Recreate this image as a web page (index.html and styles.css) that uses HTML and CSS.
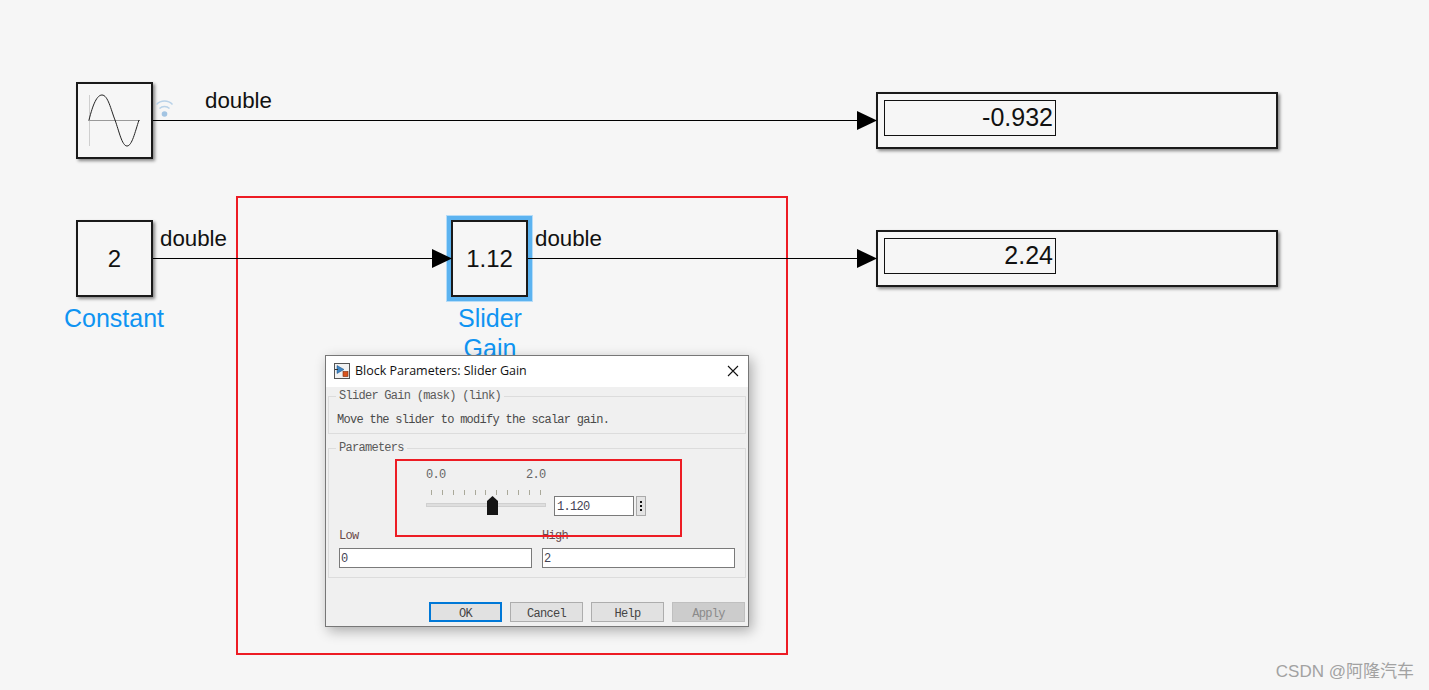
FILE: index.html
```html
<!DOCTYPE html>
<html lang="en">
<head>
<meta charset="utf-8">
<title>Slider Gain model</title>
<link rel="stylesheet" href="styles.css">
</head>
<body>
<main class="canvas">
  <svg class="wires" width="1429" height="690" viewBox="0 0 1429 690">
    <g class="wire">
      <path d="M153 120.500H858"/>
      <path d="M153 258.500H433"/>
      <path d="M528 258.500H858"/>
    </g>
    <path d="M857 111L877 120.500L857 130Z"/>
    <path d="M432 249L452 258.500L432 268Z"/>
    <path d="M857 249L877 258.500L857 268Z"/>
    <g class="wifi">
      <circle cx="164.500" cy="114" r="2.800"/>
      <path d="M159.500 108.500A7 7 0 0 1 169.500 108.500"/>
      <path d="M156.500 104.500A11 11 0 0 1 172.500 104.500"/>
    </g>
  </svg>

  <div class="red-box"></div>

  <div class="block sine">
    <svg width="73" height="73" viewBox="0 0 73 73">
      <path class="axis-v" d="M11.500 11V62"/>
      <path class="axis-h" d="M10 36.500H62"/>
      <path class="curve" d="M11 36C15 20 19 11 24 11C30 11 33 26 37 36C41 47 44 62 49 62C54 62 57 48 61 36"/>
    </svg>
  </div>
  <div class="block constant">2</div>
  <div class="block gain">1.12</div>

  <div class="label double d1">double</div>
  <div class="label double d2">double</div>
  <div class="label double d3">double</div>
  <div class="label name n1">Constant</div>
  <div class="label name n2">Slider<br>Gain</div>

  <div class="block display disp1"><div class="readout">-0.932</div></div>
  <div class="block display disp2"><div class="readout">2.24</div></div>

  <section class="dialog">
    <header class="titlebar">
      <svg class="app-icon" width="16" height="16" viewBox="0 0 16 16">
        <rect x="0.500" y="0.500" width="15" height="15" fill="#f2f2f2" stroke="#555"/>
        <path d="M3 2.500L10 6.500L3 10.500Z" fill="#3f86c4" stroke="#1d4f80" stroke-width="0.500"/>
        <path d="M1 6.500H4" stroke="#333"/>
        <rect x="9" y="8.500" width="5" height="5" fill="#d9541e" stroke="#7a2a0a" stroke-width="0.600"/>
      </svg>
      <span class="title">Block Parameters: Slider Gain</span>
      <svg class="close" width="12" height="12" viewBox="0 0 12 12"><path d="M1 1L11 11M11 1L1 11"/></svg>
    </header>
    <div class="dialog-body">
      <fieldset class="group about">
        <legend>Slider Gain (mask) (link)</legend>
        <p>Move the slider to modify the scalar gain.</p>
      </fieldset>
      <fieldset class="group params">
        <legend>Parameters</legend>
        <div class="slider-area">
          <div class="scale"><span>0.0</span><span>2.0</span></div>
          <div class="slider-row">
            <div class="slider">
              <div class="ticks"><i></i><i></i><i></i><i></i><i></i><i></i><i></i><i></i><i></i><i></i><i></i></div>
              <div class="track"></div>
              <svg class="thumb" width="11" height="19" viewBox="0 0 11 19"><path d="M0 5L5.500 0L11 5V19H0Z"/></svg>
            </div>
            <div class="field value">1.120</div>
            <div class="more"><i></i><i></i><i></i></div>
          </div>
        </div>
        <div class="limits">
          <div class="limit"><label>Low</label><div class="field">0</div></div>
          <div class="limit"><label>High</label><div class="field">2</div></div>
        </div>
      </fieldset>
      <div class="actions">
        <button class="btn default">OK</button>
        <button class="btn">Cancel</button>
        <button class="btn">Help</button>
        <button class="btn off">Apply</button>
      </div>
      <div class="red-inner"></div>
    </div>
  </section>

  <div class="watermark">CSDN @阿隆汽车</div>
</main>
</body>
</html>
```
FILE: styles.css
```css
* { box-sizing: border-box; }
html, body { margin: 0; height: 100%; }
body { background: #f6f6f6; overflow: hidden; }

.canvas {
  position: relative;
  width: 1429px;
  height: 690px;
  background: #f6f6f6;
  font-family: "Liberation Sans", Arial, sans-serif;
  color: #111;
}

.wires { position: absolute; left: 0; top: 0; z-index: 1; }
.wires > path { fill: #000; }
.wire path { fill: none; stroke: #000; stroke-width: 1; }
.wifi path { fill: none; stroke: #b9d2e8; stroke-width: 1.500; }
.wifi circle { fill: #a3c4e2; }

.red-box {
  position: absolute;
  left: 236px; top: 196px;
  width: 552px; height: 459px;
  border: 2px solid #ed1c24;
}

.block {
  position: absolute;
  display: flex;
  align-items: center;
  justify-content: center;
  width: 77px; height: 77px;
  background: #f6f6f6;
  border: 2px solid #1a1a1a;
  box-shadow: 2px 2px 3px rgba(0, 0, 0, 0.45);
  font-size: 24px;
}
.sine { left: 76px; top: 82px; }
.constant { left: 76px; top: 220px; }
.gain {
  left: 451px; top: 220px;
  outline: 4px solid #5cb3f0;
  box-shadow: 0 0 0 5px #b5dcf8;
}
.axis-v { fill: none; stroke: #cfcfcf; stroke-width: 1; }
.axis-h { fill: none; stroke: #9a9a9a; stroke-width: 1; }
.curve { fill: none; stroke: #222; stroke-width: 1; }

.label { position: absolute; white-space: nowrap; }
.double { font-size: 22.300px; line-height: 26px; color: #111; }
.d1 { left: 205px; top: 88px; }
.d2 { left: 160px; top: 226px; }
.d3 { left: 535px; top: 226px; }
.name { font-size: 25px; line-height: 30px; color: #0f94f2; text-align: center; }
.n1 { left: 64px; top: 303px; }
.n2 { left: 458px; top: 303px; }

.display {
  width: 402px; height: 57px;
  padding: 6px;
  align-items: flex-start;
  justify-content: flex-start;
}
.disp1 { left: 876px; top: 92px; }
.disp2 { left: 876px; top: 230px; }
.readout {
  width: 172px; height: 36px;
  padding-right: 2px;
  border: 1px solid #111;
  font-size: 25px;
  line-height: 32px;
  text-align: right;
}

.dialog {
  position: absolute;
  z-index: 2;
  left: 325px; top: 355px;
  width: 424px; height: 272px;
  display: flex;
  flex-direction: column;
  background: #f0f0f0;
  border: 1px solid #777;
  box-shadow: 3px 4px 12px rgba(0, 0, 0, 0.3);
  font-family: "Liberation Mono", "Courier New", monospace;
  font-size: 12px;
  letter-spacing: -0.720px;
  color: #555;
}
.titlebar {
  display: flex;
  align-items: center;
  height: 31px;
  padding: 0 9px 2px 8px;
  background: #fff;
  letter-spacing: 0;
}
.app-icon { flex: none; }
.title {
  flex: 1;
  margin-left: 5px;
  font-family: "Open Sans", sans-serif;
  font-size: 12.500px;
  color: #111;
}
.close path { fill: none; stroke: #111; stroke-width: 1.100; }

.dialog-body {
  position: relative;
  flex: 1;
  display: flex;
  flex-direction: column;
  padding: 2px 2px 0;
}
.group {
  margin: 0;
  padding: 0 8px;
  border: 1px solid #dcdcdc;
  min-width: 0;
}
.group legend {
  padding: 0 3px;
  margin-left: -1px;
  line-height: 14px;
  color: #5a5a5a;
}
.about { height: 45px; }
.about p { margin: 11px 0 0; color: #4a4a4a; line-height: 12px; }
.params { height: 137px; margin-top: 7px; }

.slider-area {
  display: flex;
  flex-direction: column;
  margin: 14px 0 0 89px;
}
.scale {
  display: flex;
  gap: 81px;
  line-height: 12px;
  color: #666;
}
.scale span { width: 19px; }
.slider-row {
  display: flex;
  align-items: flex-start;
  gap: 8px;
  margin-top: 9px;
}
.slider {
  position: relative;
  width: 120px;
  height: 26px;
}
.ticks {
  display: flex;
  justify-content: space-between;
  padding: 0 5px;
}
.ticks i { width: 1px; height: 5px; background: #aaa99a; }
.track {
  height: 4px;
  margin-top: 8px;
  background: #dedede;
  border: 1px solid #d0d0d0;
}
.thumb { position: absolute; left: 61px; top: 6px; }
.thumb path { fill: #151515; }

.field {
  height: 20px;
  padding-left: 1px;
  background: #fff;
  border: 1px solid #7a7a7a;
  line-height: 20px;
  color: #445;
}
.value { flex: none; width: 80px; margin-top: 6px; padding-left: 2px; }
.more {
  flex: none;
  display: flex;
  flex-direction: column;
  align-items: center;
  justify-content: center;
  gap: 2px;
  width: 10px;
  height: 20px;
  margin: 6px 0 0 -6px;
  background: #e4e4e4;
  border: 1px solid #aaa;
}
.more i { width: 2px; height: 2px; background: #111; }

.limits {
  display: grid;
  grid-template-columns: 193px 193px;
  gap: 10px;
  margin: 13px 0 0 2px;
}
.limit label {
  display: block;
  height: 19px;
  padding-top: 1px;
  line-height: 12px;
  color: #6a4a4a;
}

.actions {
  display: flex;
  justify-content: flex-end;
  gap: 8px;
  margin-top: 24px;
  padding-right: 1px;
}
.btn {
  width: 73px;
  height: 20px;
  padding: 3px 0 0;
  background: #e1e1e1;
  border: 1px solid #adadad;
  border-radius: 0;
  font: inherit;
  letter-spacing: inherit;
  color: #444;
}
.btn.default { border: 2px solid #0078d7; }
.btn.off { background: #cccccc; border-color: #bfbfbf; color: #8a8a8a; }

.red-inner {
  position: absolute;
  left: 69px; top: 72px;
  width: 287px; height: 78px;
  border: 2px solid #ed1c24;
  pointer-events: none;
}

.watermark {
  position: absolute;
  right: 15px; top: 662px;
  font-family: "Liberation Sans", "Noto Sans CJK SC", sans-serif;
  font-size: 17px;
  line-height: 20px;
  color: #a2a2a2;
  white-space: nowrap;
}
```
